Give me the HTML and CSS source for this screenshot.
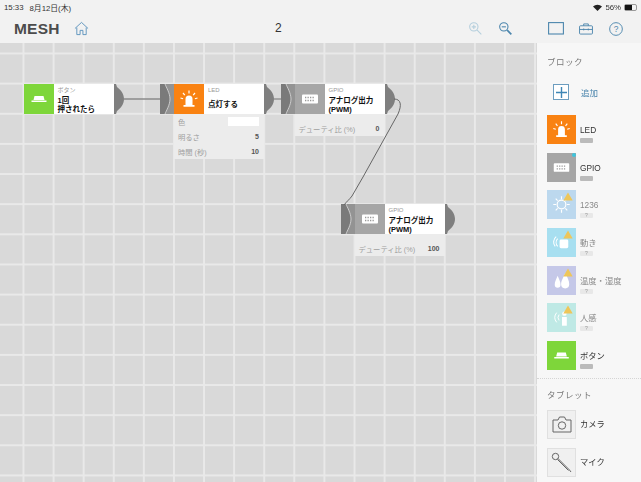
FILE: index.html
```html
<!DOCTYPE html>
<html lang="ja">
<head>
<meta charset="utf-8">
<title>MESH</title>
<link rel="stylesheet" href="styles.css">
</head>
<body>
<svg class="defs" width="0" height="0">
  <defs>
    <symbol id="out" viewBox="0 0 10 30"><path d="M0 0H2L3 3C7 6 10 10 10 15S7 24 3 27L2 30H0Z" fill="#7f7f7f"/></symbol>
    <symbol id="in" viewBox="0 0 14 30"><rect width="14" height="30" fill="#939393"/><path d="M0 0H5C6 3 10 9 10 15S6 27 5 30H0Z" fill="#7a7a7a"/><path d="M5 0C6 3 10 9 10 15S6 27 5 30" fill="none" stroke="#ddd" stroke-width=".8"/></symbol>
    <symbol id="i-led" viewBox="0 0 30 30"><path d="M11.500 21V15a3.500 3.500 0 0 1 7 0v6ZM9.500 21h11v1.800h-11Z" fill="#fff"/><path d="M15 6.500v3M9 9l1.800 2.200M21 9l-1.800 2.200M6.500 14l2.600.8M23.500 14l-2.600.8" stroke="#fff" stroke-width="1.200" fill="none"/></symbol>
    <symbol id="i-btn" viewBox="0 0 30 30"><path d="M10.500 12h9l1 4h-11ZM7.500 16.500h15V18h-15Z" fill="#fff"/></symbol>
    <symbol id="i-gpio" viewBox="0 0 30 30"><rect x="7" y="10.500" width="16" height="9" rx="1" fill="#fff"/><path d="M10 13.500h10M10 16.500h10" stroke="#999" stroke-width="1.300" stroke-dasharray="1.300 1.200"/></symbol>
    <symbol id="i-sun" viewBox="0 0 30 30"><circle cx="15" cy="15" r="4.500" fill="none" stroke="#fff" stroke-width="1.200"/><path d="M15 6.500v3M15 20.500v3M6.500 15h3M20.500 15h3M9 9l2 2M21 9l-2 2M9 21l2-2M21 21l-2-2" stroke="#fff" stroke-width="1.200"/></symbol>
    <symbol id="i-move" viewBox="0 0 30 30"><rect x="13" y="12" width="9" height="9" rx="1.500" fill="#fff"/><path d="M11 19a6 6 0 0 1 0-8M8.500 19a7 7 0 0 1 1-10" stroke="#fff" fill="none" stroke-width="1.100"/></symbol>
    <symbol id="i-temp" viewBox="0 0 30 30"><path d="M11 10c1.500 4 3 6 3 9.500a3 3 0 0 1-6 0C8 16 9.500 14 11 10Z" fill="#fff"/><path d="M19 7c2 5 4 8 4 12a4.200 4.200 0 0 1-8.400 0C14.600 15 17 12 19 7Z" fill="#fff"/></symbol>
    <symbol id="i-human" viewBox="0 0 30 30"><circle cx="18" cy="11" r="2.300" fill="#fff"/><path d="M15.500 14.500h5v9h-5Z" fill="#fff"/><path d="M12.500 18a5 5 0 0 1 0-6M10 20a8 8 0 0 1 0-10" stroke="#fff" fill="none" stroke-width="1"/></symbol>
    <symbol id="warn" viewBox="0 0 10 9"><path d="M5 0.500 9.700 8.500H.3Z" fill="#eec65a"/></symbol>
  </defs>
</svg>

<div class="app">
  <div class="status">
    <span class="time">15:33</span><span class="date">8月12日(木)</span>
    <span class="status-right">
      <svg class="wifi" width="9" height="7" viewBox="0 0 9 7"><path d="M4.500 7 0 2.500a6.500 6.500 0 0 1 9 0Z" fill="#222"/></svg>
      <span>56%</span>
      <span class="batt"><span class="batt-fill"></span></span>
    </span>
  </div>
  <header class="top">
    <div class="logo">MESH</div>
    <svg class="home" width="15" height="15" viewBox="0 0 16 16" fill="none" stroke="#5d93bd" stroke-width="1"><path d="M1 8 8 1.500 15 8M3 7v7.500h3.500V10h3v4.500H13V7"/></svg>
    <div class="title">2</div>
    <div class="tools">
      <svg class="zoom-in" width="15" height="15" viewBox="0 0 18 18" fill="none" stroke="#b5cfdd" stroke-width="1.300"><circle cx="7" cy="7" r="5"/><path d="M4.500 7h5M7 4.500v5M11 11l5 5"/></svg>
      <svg class="zoom-out" width="15" height="15" viewBox="0 0 18 18" fill="none" stroke="#4c86ad" stroke-width="1.300"><circle cx="7" cy="7" r="5"/><path d="M4.500 7h5"/><path d="M11 11l5 5" stroke-width="2"/></svg>
      <svg class="panel" width="16" height="13" viewBox="0 0 16 13" fill="none" stroke="#4c86ad" stroke-width="1.100"><rect x=".6" y=".6" width="14.800" height="11.400"/></svg>
      <svg class="case" width="14" height="12" viewBox="0 0 15 13" fill="none" stroke="#4c86ad" stroke-width="1"><rect x=".5" y="3" width="14" height="9" rx="1"/><path d="M5 3V1h5v2M.5 7h14M5 6v2M10 6v2"/></svg>
      <svg class="help" width="14" height="14" viewBox="0 0 15 15"><circle cx="7.500" cy="7.500" r="6.800" fill="none" stroke="#4c86ad"/><text x="7.500" y="10.500" text-anchor="middle" class="help-q">?</text></svg>
    </div>
  </header>

  <div class="main">
    <div class="canvas">
      <svg class="wires" width="537" height="439" viewBox="0 0 537 439" fill="none">
        <path d="M124 56H160" stroke="#8a8a8a" stroke-width="1.300"/>
        <path d="M274 56H281" stroke="#8a8a8a" stroke-width="1.300"/>
      </svg>

      <div class="node n-btn">
        <div class="icon c-green"><svg width="30" height="30"><use href="#i-btn"/></svg></div>
        <div class="label"><span class="kind">ボタン</span><b>1回<br>押されたら</b></div>
        <svg class="out" width="10" height="30"><use href="#out"/></svg>
      </div>

      <div class="node n-led">
        <svg class="in" width="14" height="30"><use href="#in"/></svg>
        <div class="icon c-orange"><svg width="30" height="30"><use href="#i-led"/></svg></div>
        <div class="label"><span class="kind">LED</span><b class="low">点灯する</b></div>
        <svg class="out" width="10" height="30"><use href="#out"/></svg>
        <div class="props">
          <div class="prop"><span>色</span><i class="swatch"></i></div>
          <div class="prop"><span>明るさ</span><b>5</b></div>
          <div class="prop"><span>時間 (秒)</span><b>10</b></div>
        </div>
      </div>

      <div class="node n-gpio1">
        <svg class="in" width="14" height="30"><use href="#in"/></svg>
        <div class="icon c-gray"><svg width="30" height="30"><use href="#i-gpio"/></svg></div>
        <div class="label"><span class="kind">GPIO</span><b>アナログ出力<br>(PWM)</b></div>
        <svg class="out" width="10" height="30"><use href="#out"/></svg>
        <div class="props props-one">
          <div class="prop"><span>デューティ比 (%)</span><b>0</b></div>
        </div>
      </div>

      <div class="node n-gpio2">
        <svg class="in" width="14" height="30"><use href="#in"/></svg>
        <div class="icon c-gray"><svg width="30" height="30"><use href="#i-gpio"/></svg></div>
        <div class="label"><span class="kind">GPIO</span><b>アナログ出力<br>(PWM)</b></div>
        <svg class="out" width="10" height="30"><use href="#out"/></svg>
        <div class="props props-one">
          <div class="prop"><span>デューティ比 (%)</span><b>100</b></div>
        </div>
      </div>

      <svg class="wires" width="537" height="439" viewBox="0 0 537 439" fill="none" stroke="#666">
        <path d="M394 56C401 56 402 62 398 71L363 134L352 153C349 157 347 158 344 162" stroke-width="1"/>
      </svg>
    </div>

    <aside class="side">
      <h2 class="side-h">ブロック</h2>
      <div class="add">
        <span class="add-box">
          <svg width="11" height="11" viewBox="0 0 11 11"><path d="M5.500 0v11M0 5.500h11" stroke="#3f86b5" stroke-width="1.400"/></svg>
        </span>
        <span class="add-text">追加</span>
      </div>
      <ul class="blocks">
        <li class="blk"><span class="tile c-orange"><svg width="29" height="29"><use href="#i-led"/></svg></span><span class="meta"><span class="name">LED</span><span class="tag"></span></span></li>
        <li class="blk"><span class="tile c-gray"><svg width="29" height="29"><use href="#i-gpio"/></svg><i class="dot"></i></span><span class="meta"><span class="name">GPIO</span><span class="tag"></span></span></li>
        <li class="blk off"><span class="tile c-sky"><svg width="29" height="29"><use href="#i-sun"/></svg><svg class="warn" width="10" height="9"><use href="#warn"/></svg></span><span class="meta"><span class="name">1236</span><span class="tag q">?</span></span></li>
        <li class="blk off"><span class="tile c-cyan"><svg width="29" height="29"><use href="#i-move"/></svg><svg class="warn" width="10" height="9"><use href="#warn"/></svg></span><span class="meta"><span class="name">動き</span><span class="tag q">?</span></span></li>
        <li class="blk off"><span class="tile c-violet"><svg width="29" height="29"><use href="#i-temp"/></svg><svg class="warn" width="10" height="9"><use href="#warn"/></svg></span><span class="meta"><span class="name">温度・湿度</span><span class="tag q">?</span></span></li>
        <li class="blk off"><span class="tile c-mint"><svg width="29" height="29"><use href="#i-human"/></svg><svg class="warn" width="10" height="9"><use href="#warn"/></svg></span><span class="meta"><span class="name">人感</span><span class="tag q">?</span></span></li>
        <li class="blk"><span class="tile c-green"><svg width="29" height="29"><use href="#i-btn"/></svg></span><span class="meta"><span class="name">ボタン</span><span class="tag"></span></span></li>
      </ul>
      <div class="divider"></div>
      <h2 class="side-h h-tablet">タブレット</h2>
      <ul class="blocks tablet">
        <li class="blk">
          <span class="tile c-tab"><svg width="20" height="17" viewBox="0 0 20 17" fill="none" stroke="#666" stroke-width="1"><path d="M1 4h5l1.500-3h5L14 4h5v12H1Z"/><circle cx="10" cy="9.500" r="3.700"/></svg></span>
          <span class="name">カメラ</span>
        </li>
        <li class="blk">
          <span class="tile c-tab"><svg width="21" height="21" viewBox="0 0 21 21" fill="none" stroke="#666" stroke-width="1"><circle cx="4.500" cy="4.500" r="3.200"/><path d="M7 6.500 18.500 18l1.500 2M6.500 7.500l11 11"/></svg></span>
          <span class="name">マイク</span>
        </li>
      </ul>
    </aside>
  </div>
</div>
</body>
</html>
```
FILE: styles.css
```css
* { box-sizing: border-box; }
html, body { margin: 0; padding: 0; }
body {
  width: 641px;
  height: 482px;
  overflow: hidden;
  font-family: "Liberation Sans", "Noto Sans CJK JP", sans-serif;
  background: #f5f5f5;
  color: #222;
}
.defs { position: absolute; }
.app { display: flex; flex-direction: column; height: 482px; filter: blur(.35px); }

.status {
  display: flex;
  align-items: center;
  height: 14px;
  padding: 0 4px;
  font-size: 7.800px;
  color: #333;
  background: #f2f2f2;
}
.date { margin-left: 6px; }
.status-right { margin-left: auto; display: flex; align-items: center; gap: 3px; }
.batt { display: block; width: 13px; height: 7px; border: 1px solid #999; border-radius: 2px; }
.batt-fill { display: block; width: 7px; height: 5px; background: #111; }

.top {
  display: flex;
  align-items: center;
  height: 29px;
  background: #f2f2f2;
  position: relative;
}
.logo {
  margin-left: 14px;
  font-size: 15.500px;
  font-weight: 700;
  letter-spacing: .2px;
  color: #4c4c4c;
}
.home { margin-left: 14px; }
.title {
  position: absolute;
  left: 275px;
  top: 7px;
  font-size: 12px;
  color: #333;
}
.tools { margin-left: auto; display: flex; align-items: center; }
.zoom-out { margin-left: 15px; }
.panel { margin-left: 35px; }
.case { margin-left: 15px; }
.help { margin-left: 16px; margin-right: 18px; }
.help-q { font-size: 9px; fill: #4c86ad; font-family: "Liberation Sans", sans-serif; }

.main { display: flex; flex: 1; min-height: 0; }

.canvas {
  position: relative;
  flex: none;
  width: 537px;
  background-color: #d9d9d9;
  background-image:
    linear-gradient(to right, #e9e9e9 1.500px, transparent 1.500px),
    linear-gradient(to bottom, #e9e9e9 1.500px, transparent 1.500px);
  background-size: 30.100px 30.150px;
  background-position: 22.500px 9.500px;
}
.wires { position: absolute; left: 0; top: 0; }

.node {
  position: absolute;
  display: flex;
  height: 30px;
}
.n-btn { left: 23.500px; top: 41px; }
.n-led { left: 160px; top: 41px; }
.n-gpio1 { left: 280.500px; top: 41px; }
.n-gpio2 { left: 340.500px; top: 161px; }

.in, .out { display: block; flex: none; }
.icon { flex: none; width: 30px; height: 30px; }
.icon svg { display: block; }

.label {
  flex: none;
  width: 60px;
  height: 30px;
  background: #fff;
  padding: 2px 0 0 4px;
  display: flex;
  flex-direction: column;
  font-size: 7px;
  line-height: 8px;
}
.kind { color: #999; font-size: 6px; line-height: 8px; }
.label b { font-weight: 700; color: #111; font-size: 7.500px; line-height: 9px; margin-top: 1.500px; }
.label b.low { margin-top: 6px; }

.props {
  position: absolute;
  left: 14px;
  top: 30px;
  width: 90px;
  background: #ececec;
  padding: 0 5px 0 4px;
}
.prop {
  display: flex;
  align-items: center;
  justify-content: space-between;
  height: 15px;
  font-size: 7.300px;
  color: #a0a0a0;
}
.prop b { color: #555; font-size: 7px; }
.props-one { height: 22px; padding-top: 7px; }
.swatch { display: block; width: 31px; height: 9px; background: #fff; }

.c-green { background: #7ed63a; }
.c-orange { background: #f98212; }
.c-gray { background: #a6a6a6; }
.c-sky { background: #bcd8ee; }
.c-cyan { background: #a7dff0; }
.c-violet { background: #c5c8e8; }
.c-mint { background: #bfe9e5; }
.c-tab { background: #f0f0f0; border: 1px solid #e0e0e0; }

.side {
  flex: none;
  width: 104px;
  background: #f7f7f7;
}
.side-h {
  margin: 0;
  padding: 14px 0 0 10px;
  font-size: 8.500px;
  line-height: 11px;
  font-weight: 400;
  color: #777;
  letter-spacing: .5px;
}
.add { display: flex; align-items: center; height: 26px; margin-top: 11px; padding-left: 16px; }
.add-box {
  display: flex;
  align-items: center;
  justify-content: center;
  width: 16px;
  height: 16px;
  border: 1px solid #6c9dbf;
  background: #fff;
}
.add-text { margin-left: 12px; font-size: 8.500px; color: #4c86ad; }

.blocks { list-style: none; margin: 10px 0 0; padding: 0 0 0 10px; display: flex; flex-direction: column; gap: 8.670px; }
.blk { display: flex; align-items: center; height: 29px; }
.tile {
  position: relative;
  flex: none;
  display: flex;
  align-items: center;
  justify-content: center;
  width: 29px;
  height: 29px;
}
.meta { display: flex; flex-direction: column; align-self: flex-start; margin: 10px 0 0 4px; }
.name { font-size: 8.300px; line-height: 11px; color: #333; }
.tablet .name { margin-left: 4px; }
.off .name { color: #8a8a8a; }
.tag { display: block; width: 13px; height: 5px; margin-top: 2px; background: #bbb; border-radius: 1px; }
.tag.q { background: #e8e8e8; color: #999; font-size: 5px; line-height: 5px; text-align: center; }
.dot { position: absolute; right: 0; top: 0; width: 4px; height: 4px; border-radius: 50%; background: #3fc4dc; }
.warn { position: absolute; right: 3px; top: 2px; }

.divider { margin-top: 8px; border-top: 1px dotted #d5d5d5; }
.h-tablet { padding-top: 11px; }
.tablet { margin-top: 9px; gap: 9px; }
```
